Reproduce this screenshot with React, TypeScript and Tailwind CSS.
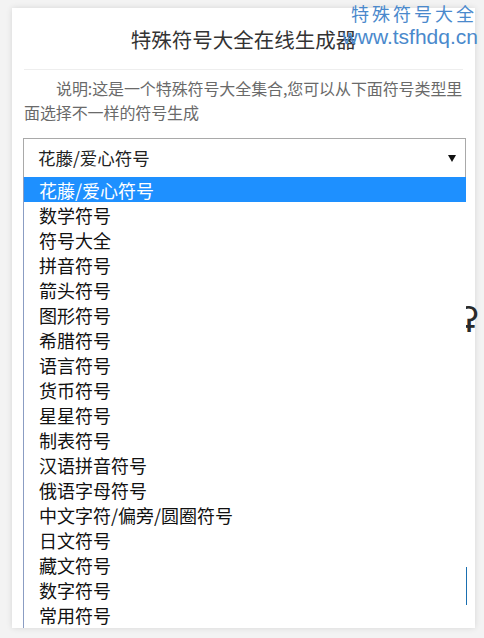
import React from "react";

const items = [
  "花藤/爱心符号",
  "数学符号",
  "符号大全",
  "拼音符号",
  "箭头符号",
  "图形符号",
  "希腊符号",
  "语言符号",
  "货币符号",
  "星星符号",
  "制表符号",
  "汉语拼音符号",
  "俄语字母符号",
  "中文字符/偏旁/圆圈符号",
  "日文符号",
  "藏文符号",
  "数字符号",
  "常用符号",
];

const font = { fontFamily: '"Noto Sans CJK SC", "Noto Sans", sans-serif' } as React.CSSProperties;

export default function App() {
  return (
    <div className="relative w-[484px] h-[638px] overflow-hidden bg-[#f3f3f3] pt-[8px] pl-[12px]" style={font}>
      <div className="relative w-[463px] h-[620px] bg-white shadow-[0_0_6px_rgba(0,0,0,0.12)] px-[12px]">
        <div className="h-[61px] flex items-center justify-center text-[20.5px] text-[#333] leading-none pt-[2px]">
          特殊符号大全在线生成器
        </div>
        <div className="border-t border-[#eeeeee]" />
        <p className="mt-[6px] text-[16px] leading-[24px] text-[#6a6a6a] indent-[32px] tracking-[-0.1px]">
          说明:这是一个特殊符号大全集合,您可以从下面符号类型里面选择不一样的符号生成
        </p>
        <div className="mt-[14px] -ml-px w-[443px] h-[40px] border border-[#a9a9a9] flex items-center justify-between pl-[14px] pr-[9px]">
          <span className="text-[17.5px] text-[#222] leading-none">花藤/爱心符号</span>
          <svg width="8" height="7" viewBox="0 0 8 7">
            <path d="M0 0 L8 0 L4 7 Z" fill="#111" />
          </svg>
        </div>
        <div className="mt-[5px] border-t border-[#f0f0f0]" />
        <div className="mt-[52px] border-t border-[#f0f0f0]" />
        <div className="relative mt-[66px] h-[32px]">
          <span
            className="absolute right-[-16px] top-0 text-[34px] leading-none text-[#2a2a2a]"
            style={{ fontFamily: '"DejaVu Sans", sans-serif' }}
          >
            ʡ
          </span>
        </div>
        <div className="mt-[206px] border-t border-[#f0f0f0]" />
        <div className="mt-[25px] h-[38px] w-[443px] border-r-2 border-[#1a6fb0]" />
      </div>

      <div className="absolute left-[23px] top-[177px] w-[443px] h-[451px] bg-white border-l border-[#8b9dc3]">
        {items.map((t, i) => (
          <div
            key={t}
            className={
              i === 0
                ? "h-[25px] flex items-center pl-[15px] text-[18px] leading-none bg-[#1e90ff] text-white"
                : "h-[25px] flex items-center pl-[15px] text-[18px] leading-none text-[#111]"
            }
          >
            {t}
          </div>
        ))}
      </div>

      <div className="absolute right-[10px] top-[1px] flex flex-col items-end">
        <div className="text-[18px] leading-[24px] tracking-[3px] text-[#4a89cc] -mr-[3px]">特殊符号大全</div>
        <div className="text-[21px] leading-[24px] text-[#4a89cc] -mr-[4px]" style={{ fontFamily: '"Liberation Sans", Arial, sans-serif' }}>
          www.tsfhdq.cn
        </div>
      </div>
    </div>
  );
}
